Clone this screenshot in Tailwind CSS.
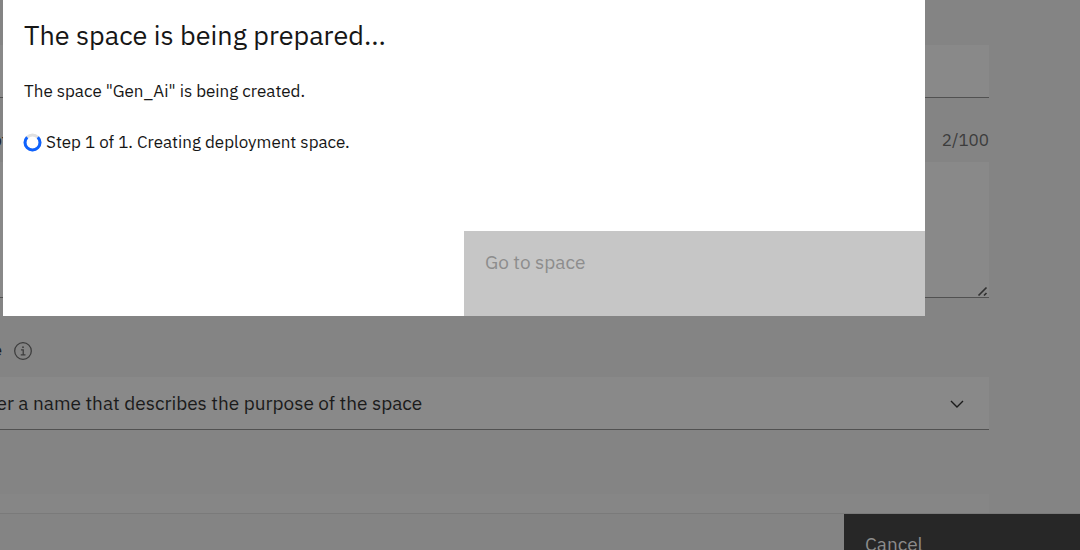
<!DOCTYPE html>
<html lang="en">
<head>
<meta charset="utf-8">
<meta name="viewport" content="width=device-width, initial-scale=1">
<title>Create a deployment space</title>
<script src="https://cdn.jsdelivr.net/npm/@tailwindcss/browser@4"></script>
</head>
<body class="relative flex h-screen flex-col overflow-hidden bg-[#848484] font-['IBM_Plex_Sans',Inter,sans-serif] text-[17px] text-[#1b1b1b]">
  <main class="flex-1 overflow-hidden">
    <form class="-ml-[52px] mr-[91px] flex flex-col pt-[45px]">
      <input type="text" aria-label="Name" class="h-[53px] w-full border-b border-[#515151] bg-[#898989] px-5 outline-none">
      <div class="flex h-16 items-center justify-between pt-5 leading-6">
        <label for="description" class="-ml-1">Description</label>
        <span class="text-[#3c3c3c]">2/100</span>
      </div>
      <div class="relative">
        <textarea id="description" class="block h-[136px] w-full resize-none border-b border-[#515151] bg-[#898989] px-5 outline-none"></textarea>
        <svg class="absolute right-0 bottom-0 size-3" viewBox="0 0 12 12" fill="none" stroke="#303030" stroke-width="1.7" aria-hidden="true"><path d="M1.500 9.500l8-8M7 9.500l2.500-2.500"/></svg>
      </div>
      <div class="mt-10 flex h-[39px] items-start gap-3 pt-1">
        <label for="stage" class="w-[54px] text-right leading-4">Stage</label>
        <svg class="size-[18px]" viewBox="0 0 16 16" fill="none" stroke="#3c3c3c" aria-hidden="true"><circle cx="8" cy="8" r="7.400" stroke-width="1.100"/><path d="M6.200 7h2v4.200M6 11.500h4.200" stroke-width="1.100"/><circle cx="8" cy="4.600" r=".8" fill="#3c3c3c" stroke="none"/></svg>
      </div>
      <div class="relative">
        <select id="stage" class="block h-[53px] w-full appearance-none border-b border-[#515151] bg-[#898989] px-5 text-[19px] outline-none">
          <option>Enter a name that describes the purpose of the space</option>
        </select>
        <svg class="pointer-events-none absolute top-[18px] right-6 size-4" viewBox="0 0 16 16" fill="none" stroke="#1b1b1b" stroke-width="1.400" aria-hidden="true"><path d="M2 6l6 6 6-6"/></svg>
      </div>
      <div class="mt-16 h-5 bg-[#868686]"></div>
    </form>
  </main>
  <footer class="flex h-[37px] justify-end overflow-hidden border-t border-[#7a7a7a]">
    <button type="button" class="h-20 w-[236px] bg-[#272727] px-[21px] text-left text-[19px] leading-7 text-[#8c8c8c]"><span class="block h-12">Cancel</span></button>
  </footer>

  <section role="dialog" aria-modal="true" aria-labelledby="dialog-title" class="absolute top-0 right-[155px] left-[3px] bg-white text-[#161616]">
    <div class="px-[21px] pt-[15px]">
      <h1 id="dialog-title" class="text-[27px] leading-10">The space is being prepared...</h1>
      <p class="mt-6 leading-6">The space "Gen_Ai" is being created.</p>
      <div class="mt-[27px] flex items-center gap-1 leading-6">
        <svg class="-ml-px size-[19px]" viewBox="0 0 19 19" fill="none" stroke-width="3" aria-hidden="true"><circle cx="9.500" cy="9.500" r="7.500" stroke="#e0e0e0"/><path d="M4.200 4.200a7.500 7.500 0 1 0 10.600 0" stroke="#0f62fe"/></svg>
        <span>Step 1 of 1. Creating deployment space.</span>
      </div>
    </div>
    <div class="mt-[77px] flex justify-end">
      <button type="button" disabled class="w-1/2 bg-[#c6c6c6] px-[21px] pt-[17px] pb-10 text-left text-[19px] leading-7 text-[#8d8d8d]">Go to space</button>
    </div>
  </section>
</body>
</html>
